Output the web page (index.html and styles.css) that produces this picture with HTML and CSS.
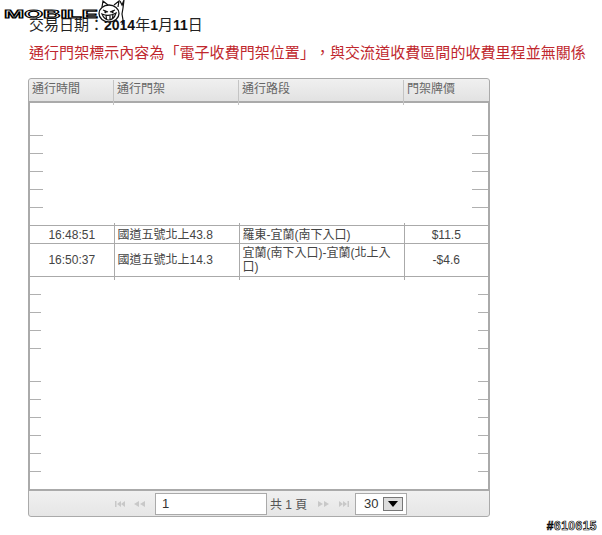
FILE: index.html
```
<!DOCTYPE html>
<html lang="zh-Hant">
<head>
<meta charset="utf-8">
<title>通行明細</title>
<link rel="stylesheet" href="styles.css">
</head>
<body>
<div class="logo">
  <svg width="130" height="32" viewBox="0 0 130 32">
    <text class="logo-text" x="4" y="17.500" textLength="94" lengthAdjust="spacingAndGlyphs">MOBILE</text>
    <ellipse class="logo-face" cx="109" cy="13.500" rx="10" ry="8.500"/>
    <path class="logo-line" d="M102 7 L103 1 L108 5 M114 5 L119 1 L118 7"/>
    <path class="logo-line" d="M103 10 L108 12 M115 10 L110 12"/>
    <circle class="logo-fill" cx="105.500" cy="12" r="1.200"/>
    <circle class="logo-fill" cx="112.500" cy="12" r="1.200"/>
    <path class="logo-line" d="M102 14 Q109 17 116 13 Q114 20 108 20 Q104 19 102 14 Z M106 15.500 L106.500 19 M110 15.500 L110 20 M113 14.500 L112.500 18"/>
    <path class="logo-line" d="M120 1 L122 5 L124 0 L123 8 L122 14 L123 20 L122 25"/>
  </svg>
</div>
<header class="intro">
  <p class="date">交易日期：<b>2014</b>年<b>1</b>月<b>11</b>日</p>
  <p class="notice">通行門架標示內容為「電子收費門架位置」，與交流道收費區間的收費里程並無關係</p>
</header>
<section class="grid">
  <div class="grid-head">
    <div class="col c1">通行時間</div>
    <div class="col c2">通行門架</div>
    <div class="col c3">通行路段</div>
    <div class="col c4">門架牌價</div>
  </div>
  <div class="grid-body">
    <div class="ticks top">
      <div class="tick"><i></i><i></i></div>
      <div class="tick"><i></i><i></i></div>
      <div class="tick"><i></i><i></i></div>
      <div class="tick"><i></i><i></i></div>
      <div class="tick"><i></i><i></i></div>
    </div>
    <table class="rows">
      <colgroup><col class="w1"><col class="w2"><col class="w3"><col class="w4"></colgroup>
      <tr class="r1">
        <td class="center">16:48:51</td>
        <td>國道五號北上43.8</td>
        <td>羅東-宜蘭(南下入口)</td>
        <td class="center">$11.5</td>
      </tr>
      <tr class="r2">
        <td class="center">16:50:37</td>
        <td>國道五號北上14.3</td>
        <td>宜蘭(南下入口)-宜蘭(北上入口)</td>
        <td class="center">-$4.6</td>
      </tr>
    </table>
    <div class="ticks low">
      <div class="tick"><i></i><i></i></div>
      <div class="tick"><i></i><i></i></div>
      <div class="tick"><i></i><i></i></div>
      <div class="tick"><i></i><i></i></div>
    </div>
    <div class="ticks low second">
      <div class="tick"><i></i><i></i></div>
      <div class="tick"><i></i><i></i></div>
      <div class="tick"><i></i><i></i></div>
      <div class="tick"><i></i><i></i></div>
      <div class="tick"><i></i><i></i></div>
      <div class="tick"><i></i><i></i></div>
    </div>
  </div>
  <div class="pager">
    <svg class="nav first" width="10" height="8" viewBox="0 0 10 8"><path d="M0 1h1.500v6H0zM6 1v6L2 4zM10 1v6L6 4z"/></svg>
    <svg class="nav prev" width="12" height="8" viewBox="0 0 12 8"><path d="M6 1v6L1 4zM12 1v6L7 4z"/></svg>
    <div class="page-input">1</div>
    <span class="total">共 1 頁</span>
    <svg class="nav next" width="12" height="8" viewBox="0 0 12 8"><path d="M0 1v6l5-3zM6 1v6l5-3z"/></svg>
    <svg class="nav last" width="10" height="8" viewBox="0 0 10 8"><path d="M0 1v6l4-3zM4 1v6l4-3zM8.500 1H10v6H8.500z"/></svg>
    <div class="page-size">
      <span>30</span>
      <span class="drop"><svg width="10" height="6" viewBox="0 0 10 6"><path d="M0 0h10L5 6z"/></svg></span>
    </div>
  </div>
</section>
<div class="mark">#610615</div>
</body>
</html>
```
FILE: styles.css
```
* { box-sizing: border-box; }
html, body { margin: 0; padding: 0; }
body {
  width: 602px;
  height: 535px;
  background: #fff;
  overflow: hidden;
  position: relative;
  font-family: "Liberation Sans", "Noto Sans CJK TC", sans-serif;
  color: #333;
  text-spacing-trim: space-all;
}
.logo { position: absolute; left: 0; top: 0; width: 130px; height: 32px; z-index: 2; }
.logo svg { display: block; }
.logo-text {
  font-family: "Liberation Sans", sans-serif;
  font-size: 11.500px;
  font-weight: 700;
  fill: #fff;
  stroke: #000;
  stroke-width: 0.850;
}
.logo-face { fill: #fff; stroke: #111; stroke-width: 1.300; }
.logo-line { fill: none; stroke: #111; stroke-width: 1.200; }
.logo-fill { fill: #111; }

.intro { padding: 16px 0 0 29px; height: 78px; }
.date { margin: 0; font-size: 15px; line-height: 18px; color: #222; }
.date b { font-size: 14px; font-weight: 700; color: #111; }
.notice { margin: 10px 0 0; font-size: 15px; line-height: 18px; letter-spacing: 0.050px; color: #c0272d; white-space: nowrap; }

.grid {
  margin-left: 28px;
  width: 462px;
  height: 439px;
  display: flex;
  flex-direction: column;
  border-radius: 3px;
  overflow: hidden;
}
.grid-head {
  height: 25px;
  display: flex;
  padding-left: 2px;
  border: 1px solid #aaa;
  border-bottom: 2px solid #aaa;
  border-radius: 3px 3px 0 0;
  background: linear-gradient(#f0f0f0, #e2e2e2);
  font-size: 12px;
  line-height: 21px;
  color: #666;
}
.col { position: relative; padding-left: 3px; }
.col::after {
  content: "";
  position: absolute;
  top: 1px;
  right: 0;
  width: 1px;
  height: 25px;
  background: #c4c4c4;
}
.c1 { width: 84px; margin-left: -1px; padding-left: 2px; }
.c2 { width: 125px; }
.c3 { width: 165px; }
.c4 { flex: 1; }
.c4::after { display: none; }

.grid-body {
  flex: 1;
  display: flex;
  flex-direction: column;
  border-left: 2px solid #aaa;
  border-right: 2px solid #aaa;
  background: #fff;
}
.ticks { display: flex; flex-direction: column; }
.top { padding: 15px 0 17px; }
.low.second { padding-top: 15px; }
.tick {
  height: 18px;
  display: flex;
  justify-content: space-between;
  align-items: flex-end;
}
.tick i { display: block; height: 1px; background: #b0b0b0; }
.top .tick i:first-child { width: 13px; }
.top .tick i:last-child { width: 16px; }
.low .tick i:first-child { width: 11px; }
.low .tick i:last-child { width: 10px; }

.rows {
  width: 458px;
  border-collapse: collapse;
  table-layout: fixed;
  font-size: 12px;
  line-height: 14px;
  color: #444;
}
.w1 { width: 84px; }
.w2 { width: 125px; }
.w3 { width: 165px; }
.w4 { width: 84px; }
.rows td {
  position: relative;
  padding: 0 12px 0 3px;
  border-top: 1px solid #aaa;
  border-bottom: 1px solid #aaa;
  border-right: 1px solid #aaa;
}
.rows td:last-child { border-right: 0; }
.r1 { height: 18px; }
.r2 { height: 33px; }
.rows td.center { padding: 0; text-align: center; }
.r1 td:not(:last-child)::after,
.r2 td:not(:last-child)::after {
  content: "";
  position: absolute;
  right: -1px;
  width: 1px;
  height: 3px;
  background: #aaa;
}
.r1 td:not(:last-child)::after { top: -3px; }
.r2 td:not(:last-child)::after { bottom: -4px; }

.pager {
  height: 28px;
  display: flex;
  align-items: center;
  padding-left: 86px;
  border: 1px solid #aaa;
  border-top: 2px solid #aaa;
  border-radius: 0 0 3px 3px;
  background: linear-gradient(#f0f0f0, #e6e6e6);
  font-size: 13px;
  color: #555;
}
.nav { display: block; fill: #c8c8c8; }
.first { margin-top: 1px; }
.prev { margin: 1px 0 0 8px; }
.page-input {
  width: 112px;
  height: 22px;
  margin-left: 10px;
  padding-left: 6px;
  border: 1px solid #aaa;
  background: #fff;
  font-size: 13px;
  line-height: 20px;
  color: #333;
}
.total { margin-left: 3px; width: 48px; font-size: 12px; }
.next { margin-top: 1px; }
.last { margin: 1px 0 0 9px; }
.page-size {
  width: 52px;
  height: 22px;
  margin-left: 6px;
  padding: 0 3px 0 8px;
  display: flex;
  align-items: center;
  justify-content: space-between;
  border: 1px solid #aaa;
  background: #fff;
  font-size: 13px;
  color: #333;
}
.drop {
  width: 20px;
  height: 14px;
  display: flex;
  align-items: center;
  justify-content: center;
  border: 1px solid #777;
  background: #ddd;
}
.drop svg { display: block; }
.drop path { fill: #000; }

.mark {
  position: absolute;
  right: 5px;
  bottom: 3px;
  font-family: "Liberation Sans", sans-serif;
  font-size: 12px;
  line-height: 12px;
  font-weight: 700;
  color: #fff;
  -webkit-text-stroke: 0.700px #000;
  letter-spacing: 0.500px;
}
```
